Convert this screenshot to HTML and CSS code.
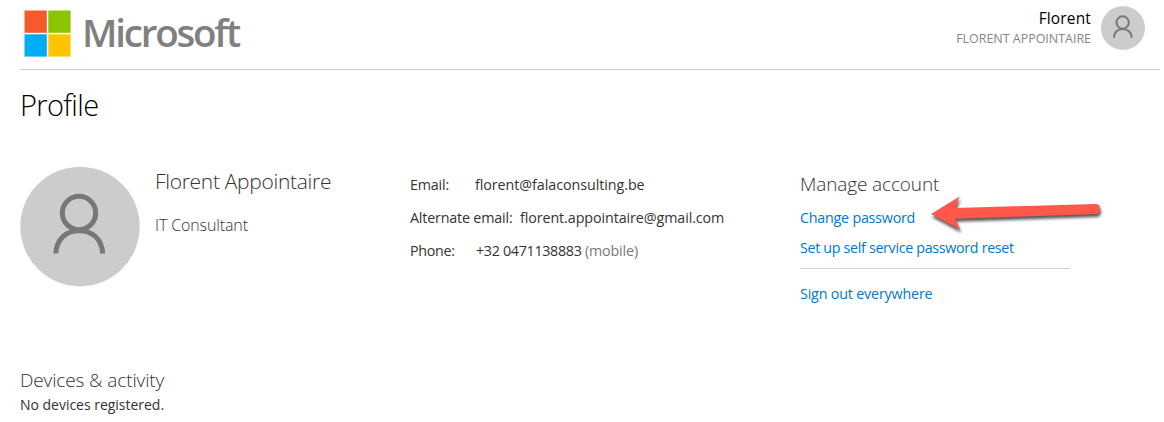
FILE: index.html
```html
<!DOCTYPE html>
<html lang="en">
<head>
<meta charset="utf-8">
<title>Profile</title>
<link rel="stylesheet" href="styles.css">
</head>
<body>
<header class="header">
  <div class="brand">
    <svg class="brand-mark" width="48" height="48" viewBox="0 0 48 48">
      <path fill="#f65a2a" d="M.5 .5h22.300v22.300H.5z"/>
      <path fill="#8bc400" d="M24.300 .5h22.300v22.300H24.300z"/>
      <path fill="#00adf5" d="M.5 24.300h22.300v22.300H.5z"/>
      <path fill="#ffc400" d="M24.300 24.300h22.300v22.300H24.300z"/>
    </svg>
    <span class="brand-name">Microsoft</span>
  </div>
  <div class="user">
    <div class="user-text">
      <div class="user-first"><span>Florent</span></div>
      <div class="user-full"><span>FLORENT APPOINTAIRE</span></div>
    </div>
    <svg class="user-avatar" width="44" height="44" viewBox="0 0 120 120">
      <circle cx="60" cy="60" r="60" fill="#ccc"/>
      <g fill="none" stroke="#777" stroke-width="5.5"><circle cx="59" cy="45" r="16.8"/><path d="M35.500 86.500C35.500 71 46 62.500 59 62.500S83.500 71 83.500 86.500"/></g>
    </svg>
  </div>
</header>
<main>
  <h1 class="title"><span>Profile</span></h1>
  <section class="profile">
    <svg class="avatar" width="120" height="120" viewBox="0 0 120 120">
      <circle cx="60" cy="59.500" r="59.700" fill="#ccc"/>
      <g fill="none" stroke="#777" stroke-width="5"><circle cx="59" cy="46" r="16.700"/><path d="M35.800 86.500C36.500 72 46 63.800 59.200 63.800S82 72 82.700 86.500"/></g>
    </svg>
    <div class="identity">
      <h2 class="name"><span>Florent Appointaire</span></h2>
      <div class="job"><span>IT Consultant</span></div>
    </div>
    <dl class="contact">
      <div class="row"><dt class="label alternate-label"><span>Email:</span></dt><dd class="value email"><span>florent@falaconsulting.be</span></dd></div>
      <div class="row"><dt class="label alternate-label"><span>Alternate email:</span></dt><dd class="value alternate"><span>florent.appointaire@gmail.com</span></dd></div>
      <div class="row"><dt class="label"><span>Phone:</span></dt><dd class="value phone"><span>+32 0471138883</span> <span class="kind">(mobile)</span></dd></div>
    </dl>
    <nav class="manage">
      <h3 class="subhead"><span>Manage account</span></h3>
      <a class="link change"><span>Change password</span></a>
      <a class="link reset"><span>Set up self service password reset</span></a>
      <hr class="rule">
      <a class="link signout"><span>Sign out everywhere</span></a>
      <svg class="arrow" width="184" height="46" viewBox="0 0 184 46">
        <path fill="#ff584b" d="M5 19L33.500 1.500L29.200 13L169.500 9Q174 9 174 14Q174 19 169.500 19L29 23.700L34.300 34.700Z"/>
      </svg>
    </nav>
  </section>
  <section class="devices">
    <h3 class="subhead devices-head"><span>Devices &amp; activity</span></h3>
    <p class="none"><span>No devices registered.</span></p>
  </section>
</main>
</body>
</html>
```
FILE: styles.css
```css
* { box-sizing: border-box; margin: 0; padding: 0; }
body { background: #fff; color: #333; font-family: "Open Sans", "Noto Sans", sans-serif; overflow: hidden; white-space: nowrap; }
.header { display: flex; justify-content: space-between; margin: 0 4px 0 20px; height: 70px; border-bottom: 1px solid #d0d0d0; }
.brand { display: flex; padding: 10px 0 0 4px; }
.brand-name { margin-left: 10px; font-size: 38.5px; font-weight: 600; line-height: 45px; letter-spacing: -2.2px; color: #808080; }
.user { display: flex; padding: 6px 15px 0 0; }
.user-text { text-align: right; margin-right: 10px; }
.user-first { font-size: 15.5px; line-height: 24px; letter-spacing: 0.15px; color: #000; }
.user-full { font-size: 12.5px; line-height: 18px; color: #858585; letter-spacing: -0.03px; }
.title { margin: 15px 0 0 20px; font-size: 29px; line-height: 40px; font-weight: 300; color: #000; letter-spacing: -0.65px; }
.profile { display: grid; grid-template-columns: 135px 255px 390px 270px; margin: 42px 0 0 20px; height: 199px; align-items: start; }
.identity { margin-top: -1px; }
.name { font-size: 21px; line-height: 30px; font-weight: 300; letter-spacing: -0.3px; }
.job { margin-top: 17px; font-size: 16px; line-height: 24px; font-weight: 300; letter-spacing: -0.12px; }
.contact { margin-top: 1px; font-size: 14.3px; line-height: 33px; letter-spacing: -0.3px; }
.row { display: flex; }
.label { width: 65px; }
.alternate-label { letter-spacing: -0.18px; }
.email { letter-spacing: -0.06px; }
.alternate { margin-left: 45px; letter-spacing: -0.09px; }
.phone { margin-left: 1px; letter-spacing: -0.32px; }
.kind { color: #777; letter-spacing: -0.15px; }
.manage { position: relative; margin-top: 3px; }
.subhead { font-size: 19px; line-height: 28px; font-weight: 300; letter-spacing: -0.13px; }
.link { display: block; font-size: 14.3px; line-height: 30px; letter-spacing: -0.3px; color: #0078d0; }
.change { margin-top: 5px; letter-spacing: -0.23px; }
.reset { letter-spacing: -0.33px; }
.rule { margin-top: 5px; border: 0; height: 1px; background: #d0d0d0; }
.signout { margin-top: 10px; letter-spacing: -0.18px; }
.arrow { position: absolute; left: 126px; top: 25px; filter: drop-shadow(1px 3px 1.5px rgba(0, 0, 0, .65)); }
.devices { margin-left: 20px; }
.none { margin-top: 1px; font-size: 14px; line-height: 20px; letter-spacing: -0.02px; }
```
